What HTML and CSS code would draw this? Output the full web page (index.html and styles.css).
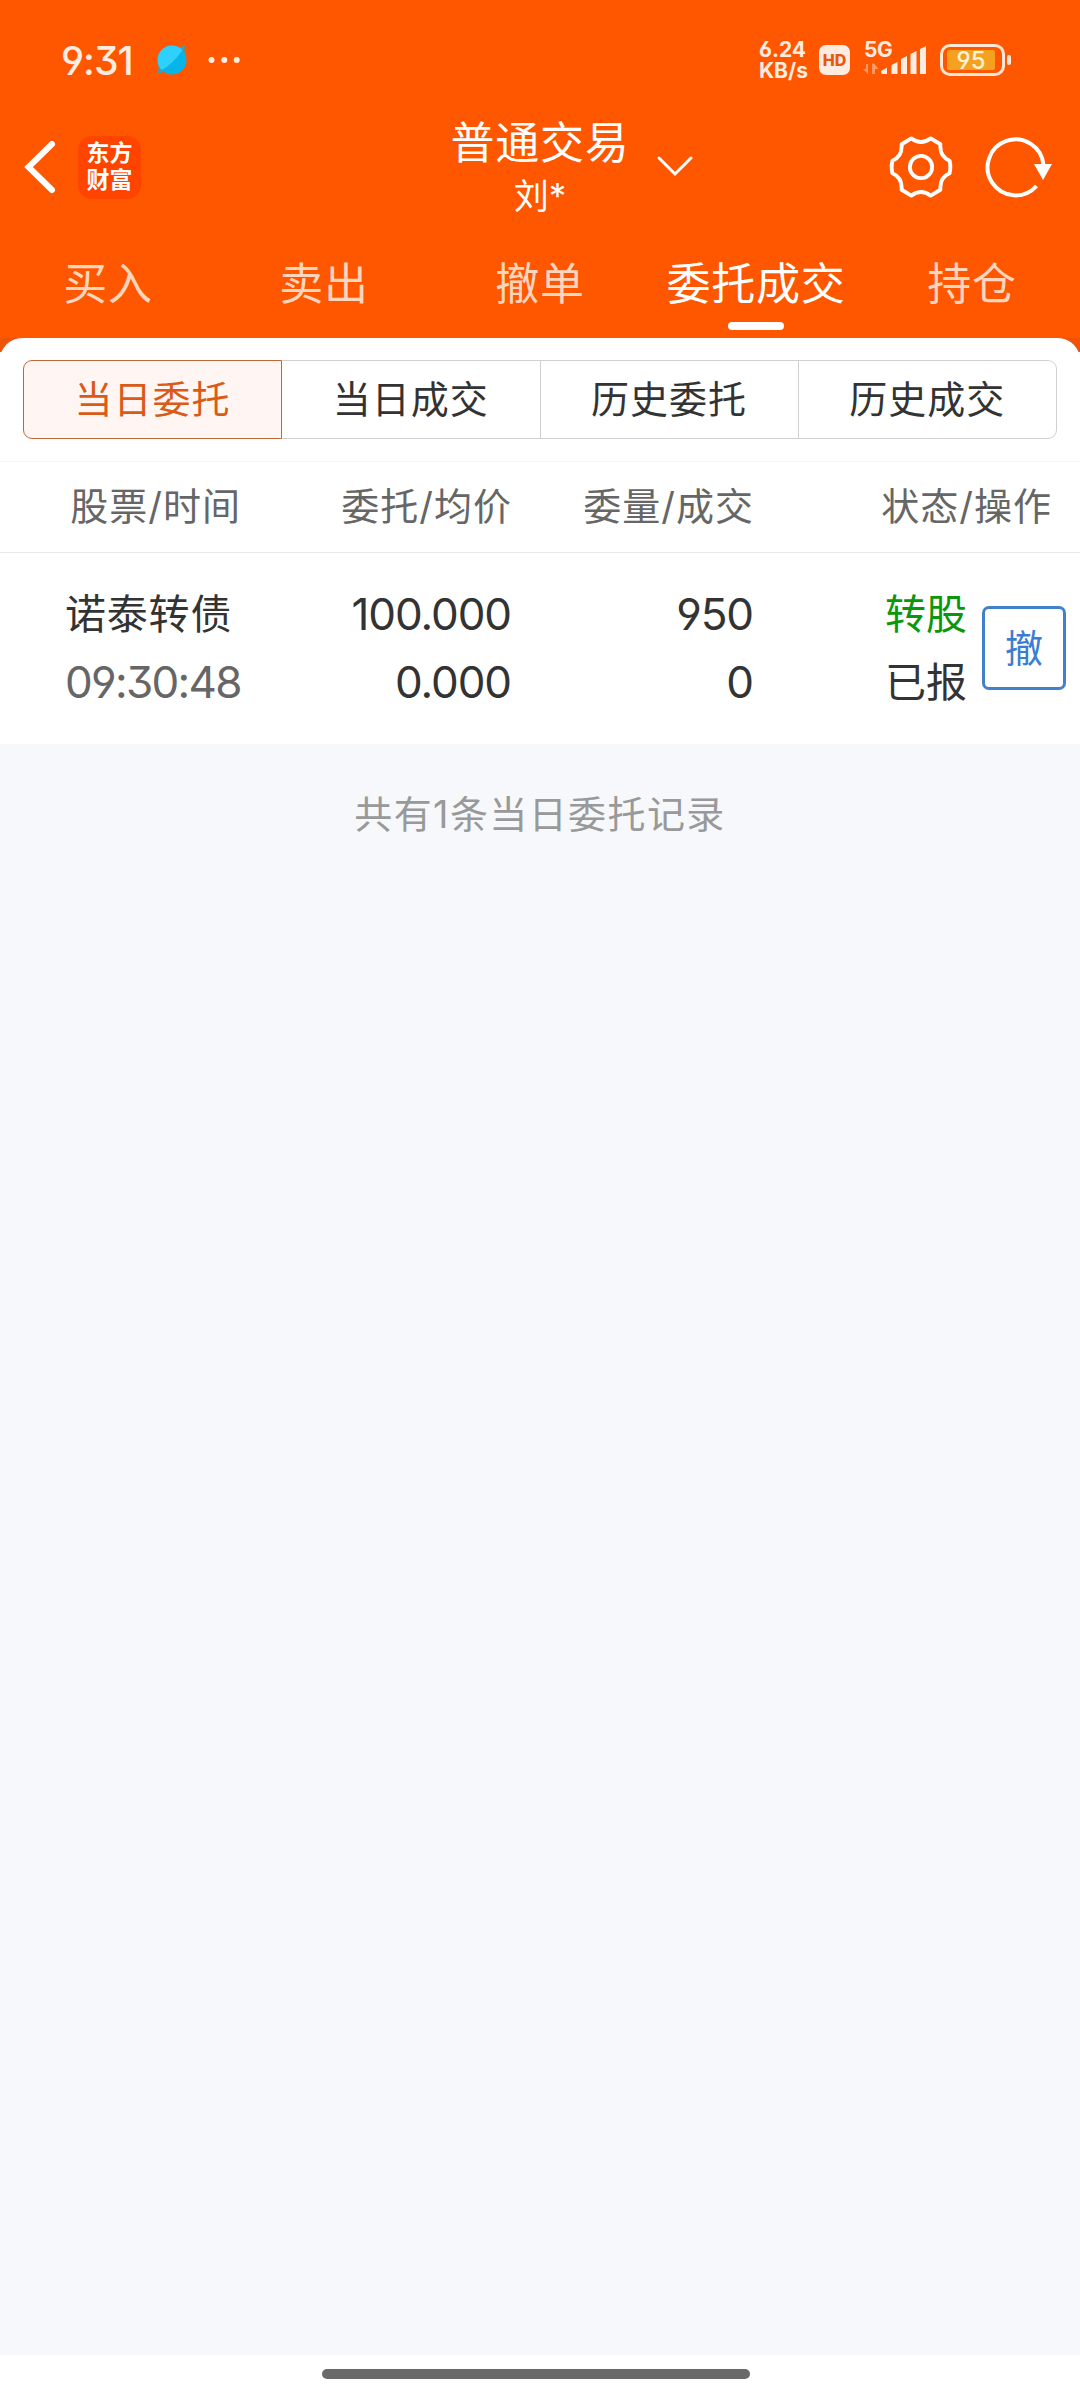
FILE: index.html
```html
<!DOCTYPE html>
<html lang="zh-CN">
<head>
<meta charset="UTF-8">
<meta name="viewport" content="width=device-width, initial-scale=1.0">
<title>委托成交</title>
<link rel="stylesheet" href="styles.css">
</head>
<body>

<header class="header">
  <div class="status-bar">
    <span class="time">9:31</span>
    <svg class="app-dot" width="32" height="32" viewBox="0 0 32 32">
      <path d="M29 1 L19 6 L28 14 Z M2 30 L12 26 L3 18 Z" fill="#3f9fb5"/>
      <circle cx="16" cy="16" r="14.5" fill="#08b5e8"/>
      <path d="M5.5 26 A14.5 14.5 0 1 1 26.5 6 Q17 20 5.5 26 Z" fill="#2fd0fb"/>
    </svg>
    <svg class="more" width="32" height="8" viewBox="0 0 32 8">
      <circle cx="3.5" cy="4" r="3"/><circle cx="16.3" cy="4" r="3"/><circle cx="28.7" cy="4" r="3"/>
    </svg>
    <div class="status-right">
      <div class="speed"><span>6.24</span><span>KB/s</span></div>
      <span class="hd">HD</span>
      <div class="signal">
        <span class="net">5G</span>
        <svg width="64" height="30" viewBox="0 0 64 30">
          <path class="arrows" d="M5 19 V29 L0 24 H3 V19 Z M9 29 V18.5 H11 L15.5 24 H12 V29 Z"/>
          <path d="M18 26 L24 22.5 V29 H20 Q18 29 18 27 Z M28.5 20 L34.5 17 V29 H28.5 Z M38 14 L44 11 V29 H38 Z M47.500 9 L53.500 6 V29 H47.500 Z M57 4 L63 1 V29 H57 Z"/>
        </svg>
      </div>
      <div class="battery"><span>95</span></div>
      <i class="battery-cap"></i>
    </div>
  </div>

  <div class="title-bar">
    <svg class="back" width="36" height="56" viewBox="0 0 36 56">
      <path d="M31 5 L7.500 28 L31 51"/>
    </svg>
    <div class="logo"><span>东方</span><span>财富</span></div>
    <div class="account">
      <h1>普通交易</h1>
      <p>刘*</p>
    </div>
    <svg class="arrow-down" width="36" height="22" viewBox="0 0 36 22">
      <path d="M2 2 L18 18 L34 2"/>
    </svg>
    <svg class="gear" width="64" height="64" viewBox="0 0 66 66">
      <path d="M23 3.500 Q33 11 43 3.500 L53 9.500 Q52 22 62.500 26.500 Q64 33 62.500 39.500 Q52 44 53 56.500 L43 62.500 Q33 55 23 62.500 L13 56.500 Q14 44 3.500 39.500 Q2 33 3.500 26.500 Q14 22 13 9.500 Z"/>
      <circle cx="33" cy="33" r="11.500"/>
    </svg>
    <svg class="refresh" width="70" height="66" viewBox="0 0 70 66">
      <path d="M52.500 52 A28 28 0 1 1 59.500 31"/>
      <path class="tip" d="M50 30 H68 L59 46 Z"/>
    </svg>
  </div>

  <nav class="tabs">
    <a class="tab">买入</a>
    <a class="tab">卖出</a>
    <a class="tab">撤单</a>
    <a class="tab active">委托成交</a>
    <a class="tab">持仓</a>
  </nav>
</header>

<main class="main">
  <div class="sheet">
    <div class="segments">
      <a class="segment active">当日委托</a>
      <a class="segment">当日成交</a>
      <a class="segment">历史委托</a>
      <a class="segment">历史成交</a>
    </div>

    <div class="row row-head">
      <span>股票/时间</span>
      <span>委托/均价</span>
      <span>委量/成交</span>
      <span>状态/操作</span>
    </div>

    <div class="row order">
      <div class="cell stock">
        <span>诺泰转债</span>
        <span class="num gray">09:30:48</span>
      </div>
      <div class="cell">
        <span class="num">100.000</span>
        <span class="num">0.000</span>
      </div>
      <div class="cell">
        <span class="num">950</span>
        <span class="num">0</span>
      </div>
      <div class="cell state">
        <span class="green">转股</span>
        <span>已报</span>
      </div>
      <button class="cancel">撤</button>
    </div>
  </div>

  <p class="total">共有1条当日委托记录</p>
</main>

<footer class="home"><div class="home-bar"></div></footer>

</body>
</html>
```
FILE: styles.css
```css
* {
  box-sizing: border-box;
}

body {
  margin: 0;
  height: 2400px;
  display: flex;
  flex-direction: column;
  font-family: Inter, "Noto Sans CJK SC", sans-serif;
  font-feature-settings: "cv03", "cv04", "cv09";
  background-color: #f6f8fb;
  color: #333;
}

h1, p {
  margin: 0;
  font-weight: 400;
}

svg {
  display: block;
  flex: none;
}

.header {
  height: 338px;
  background-color: #ff5600;
  color: #fff;
}

/* status bar */
.status-bar {
  height: 120px;
  padding: 0 69px 0 61px;
  display: flex;
  align-items: center;
  color: #ffece0;
}

.time {
  width: 95px;
  font-size: 39px;
  font-weight: 500;
  letter-spacing: -1px;
}

.more {
  margin-left: 20px;
  fill: #ffece0;
}

.status-right {
  margin-left: auto;
  display: flex;
  align-items: center;
}

.speed {
  width: 60px;
  display: flex;
  flex-direction: column;
  font-size: 21px;
  font-weight: 700;
  line-height: 21px;
}

.hd {
  width: 31px;
  height: 30px;
  margin-right: 13px;
  border-radius: 7px;
  background-color: #ffece0;
  color: #e8560f;
  font-size: 16px;
  font-weight: 800;
  line-height: 30px;
  text-align: center;
}

.signal {
  position: relative;
  width: 64px;
  margin-right: 13px;
  fill: #ffece0;
}

.arrows {
  fill: #ff9a66;
}

.net {
  position: absolute;
  left: 1px;
  top: -7px;
  font-size: 21px;
  font-weight: 700;
  letter-spacing: -0.5px;
  line-height: 24px;
}

.battery {
  width: 65px;
  height: 32px;
  padding: 4px;
  border: 3px solid #ffe6d6;
  border-radius: 10px;
}

.battery span {
  display: block;
  width: 48px;
  height: 20px;
  margin-top: -1px;
  border-radius: 2px;
  background-color: #f5a11f;
  color: #fff3d8;
  font-size: 24px;
  font-weight: 500;
  line-height: 22px;
  text-align: center;
}

.battery-cap {
  width: 4px;
  height: 10px;
  margin-left: 2px;
  border-radius: 2px;
  background-color: #ffe6d6;
}

/* title bar */
.title-bar {
  height: 112px;
  padding: 0 26px 18px 21px;
  display: flex;
  align-items: center;
}

.back {
  fill: none;
  stroke: #fff;
  stroke-width: 6;
  stroke-linecap: round;
}

.logo {
  width: 63px;
  height: 63px;
  margin-left: 21px;
  padding-top: 4px;
  display: flex;
  flex-direction: column;
  align-items: center;
  border-radius: 14px;
  background-color: #ff4400;
  font-size: 23px;
  font-weight: 700;
  line-height: 27px;
}

.account {
  width: 180px;
  margin-left: 309px;
  padding-top: 2px;
  text-align: center;
}

.account h1 {
  font-size: 44px;
  letter-spacing: 0.8px;
  line-height: 56px;
  white-space: nowrap;
}

.account p {
  font-size: 35px;
  line-height: 50px;
}

.arrow-down {
  margin-left: 27px;
  fill: none;
  stroke: #fff;
  stroke-width: 3;
  stroke-linecap: round;
}

.gear {
  margin-left: auto;
  fill: none;
  stroke: #fff;
  stroke-width: 4;
  stroke-linejoin: round;
}

.refresh {
  margin-left: 31px;
  fill: none;
  stroke: #fff;
  stroke-width: 4;
}

.tip {
  fill: #fff;
  stroke: none;
}

/* main tabs */
.tabs {
  display: flex;
  height: 106px;
}

.tab {
  flex: 1;
  display: flex;
  flex-direction: column;
  align-items: center;
  font-size: 44px;
  letter-spacing: 0.8px;
  line-height: 105px;
  color: #ffd5bd;
  white-space: nowrap;
}

.tab.active {
  color: #fff;
}

.tab.active::after {
  content: "";
  width: 56px;
  height: 8px;
  margin-top: -15px;
  border-radius: 4px;
  background-color: #fff;
}

/* content */
.main {
  flex: 1;
  background: linear-gradient(#ee530a, #ee530a) top / 100% 14px no-repeat;
}

.sheet {
  border-radius: 22px 22px 0 0;
  background-color: #fff;
  overflow: hidden;
}

.segments {
  display: flex;
  margin: 22px 23px;
}

.segment {
  flex: 1;
  height: 79px;
  border: 1px solid #d0d0d0;
  border-left: 0;
  font-size: 38px;
  letter-spacing: 1px;
  line-height: 76px;
  text-align: center;
}

.segment:last-child {
  border-radius: 0 9px 9px 0;
}

.segment.active {
  border: 1px solid #c0673a;
  border-radius: 9px 0 0 9px;
  background-color: #fff6f3;
  color: #d95b17;
}

.row {
  display: grid;
  grid-template-columns: 241px 271px 242px 1fr;
}

.row-head {
  height: 92px;
  padding-right: 28px;
  border-top: 1px solid #f5f5f5;
  border-bottom: 1px solid #e9e9e9;
  font-size: 38px;
  letter-spacing: 1px;
  line-height: 89px;
  text-align: right;
  color: #666;
}

.order {
  height: 191px;
  padding: 27px 14px 0 0;
  grid-template-columns: 240px 271px 242px 214px 1fr;
}

.cell {
  display: flex;
  flex-direction: column;
  text-align: right;
  font-size: 41px;
  line-height: 68px;
}

.stock {
  padding-left: 65px;
  text-align: left;
  white-space: nowrap;
  letter-spacing: 0.8px;
}

.num {
  font-size: 44px;
  letter-spacing: -1.1px;
}

.gray {
  letter-spacing: -1.7px;
  color: #666;
}

.green {
  color: #0b960b;
}

.cancel {
  width: 84px;
  height: 84px;
  margin-top: 26px;
  padding: 0;
  justify-self: end;
  border: 3px solid #4080cc;
  border-radius: 7px;
  background-color: #fff;
  color: #3b7dd0;
  font-family: inherit;
  font-size: 38px;
  line-height: 72px;
}

.total {
  padding-top: 40px;
  font-size: 38px;
  letter-spacing: 1.4px;
  line-height: 60px;
  text-align: center;
  color: #999;
}

.home {
  height: 45px;
  padding-top: 14px;
  background-color: #fff;
}

.home-bar {
  width: 428px;
  height: 10px;
  margin-left: 322px;
  border-radius: 5px;
  background-color: #696969;
}
```
